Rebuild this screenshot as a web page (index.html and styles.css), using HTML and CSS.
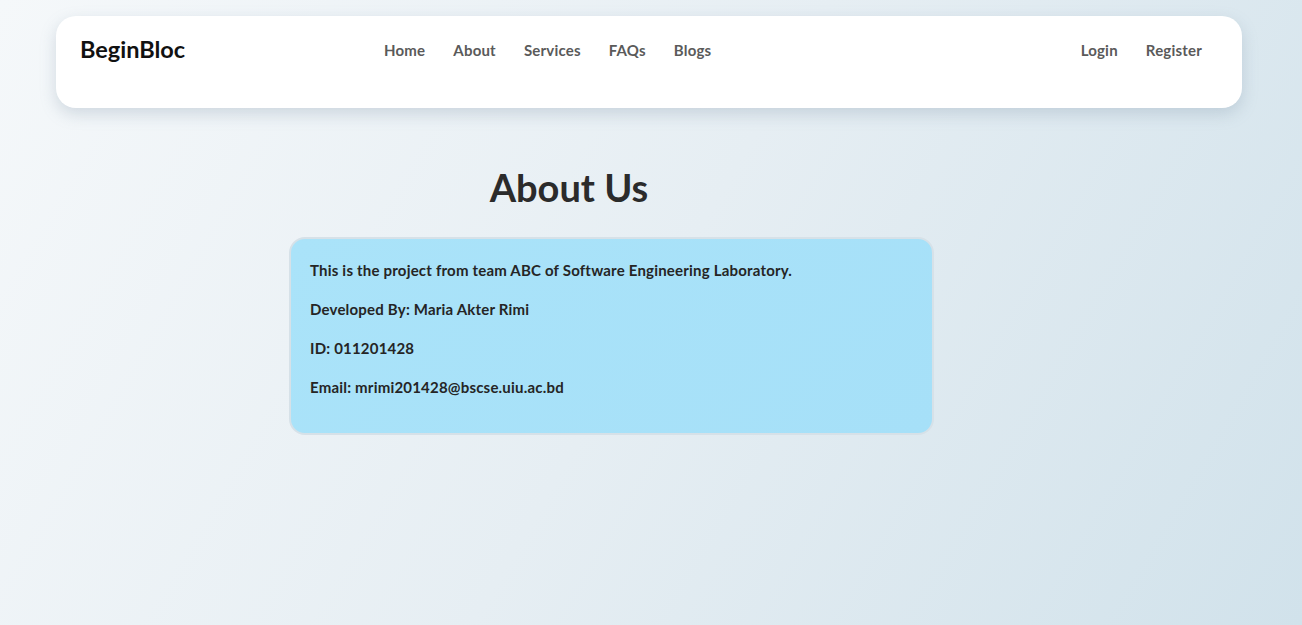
FILE: index.html
```html
<!DOCTYPE html>
<html lang="en">
<head>
<meta charset="utf-8">
<title>About Us - BeginBloc</title>
<link rel="stylesheet" href="styles.css">
</head>
<body>
  <header class="navbar">
    <div class="brand">BeginBloc</div>
    <nav class="nav-main">
      <a href="#">Home</a>
      <a href="#">About</a>
      <a href="#">Services</a>
      <a href="#">FAQs</a>
      <a href="#">Blogs</a>
    </nav>
    <nav class="nav-auth">
      <a href="#">Login</a>
      <a href="#">Register</a>
    </nav>
  </header>
  <main class="about">
    <h1 class="about-title">About Us</h1>
    <section class="about-card">
      <p>This is the project from team ABC of Software Engineering Laboratory.</p>
      <p>Developed By: Maria Akter Rimi</p>
      <p>ID: 011201428</p>
      <p>Email: mrimi201428@bscse.uiu.ac.bd</p>
    </section>
  </main>
</body>
</html>
```

FILE: styles.css
```css
* { box-sizing: border-box; }
html, body { height: 100%; }
body {
  margin: 0;
  font-family: Lato, "Noto Sans", sans-serif;
  background: linear-gradient(120deg, #f5f8fa 0%, #e6eef3 50%, #d1e2eb 100%);
  color: #2a2a2a;
  padding: 16px 60px 0 56px;
}
.navbar {
  display: flex;
  align-items: flex-start;
  height: 92px;
  background: #fff;
  border-radius: 20px;
  box-shadow: 0 6px 16px rgba(120, 140, 160, 0.28);
  padding: 21px 40px 0 24px;
}
.brand {
  font-size: 23.5px;
  font-weight: 700;
  color: #111;
  line-height: 24px;
  width: 304px;
}
.nav-main, .nav-auth {
  display: flex;
  gap: 28px;
  padding-top: 4px;
}
.nav-main a, .nav-auth a {
  color: #5a5a5a;
  text-decoration: none;
  font-size: 15px;
  font-weight: 700;
  line-height: 18px;
  letter-spacing: 0.2px;
}
.nav-auth { margin-left: auto; }
.about {
  padding-left: 233px;
  padding-top: 57px;
}
.about-title {
  margin: 0 0 28px 0;
  width: 560px;
  text-align: center;
  font-size: 38px;
  font-weight: 700;
  line-height: 44px;
  color: #2b2b2b;
}
.about-card {
  width: 645px;
  height: 198px;
  border: 2px solid #d6e1e8;
  border-radius: 16px;
  background: linear-gradient(135deg, #aae3f9 0%, #a6e0f8 100%);
  padding: 21px 19px;
}
.about-card p {
  margin: 0 0 19px 0;
  font-size: 15px;
  font-weight: 700;
  line-height: 20px;
  letter-spacing: 0.2px;
  color: #252525;
}
```
